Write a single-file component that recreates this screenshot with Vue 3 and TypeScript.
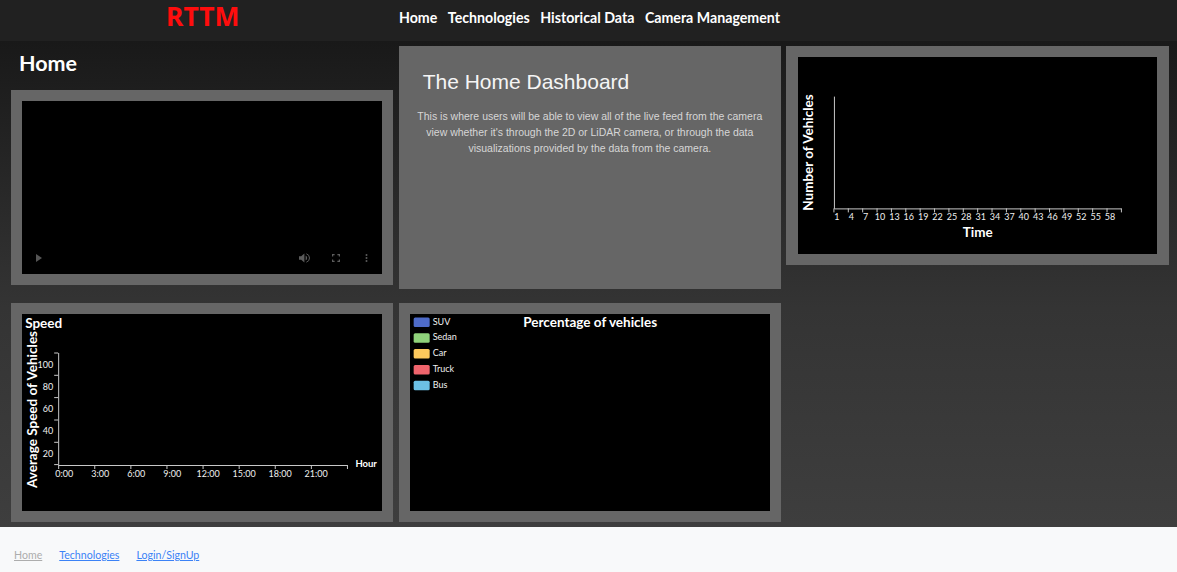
<script setup lang="ts">
const navLinks: string[] = ['Home', 'Technologies', 'Historical Data', 'Camera Management']
const footerLinks = [
  { label: 'Home', muted: true },
  { label: 'Technologies', muted: false },
  { label: 'Login/SignUp', muted: false },
]
const timeLabels: number[] = Array.from({ length: 20 }, (_, i) => 1 + i * 3)
const timeTicks: number[] = Array.from({ length: 21 }, (_, i) => 36 + i * 14.4)
const speedYTicks: number[] = [39, 61.3, 83.6, 106, 128.3, 150.6]
const speedYLabels: number[] = [100, 80, 60, 40, 20]
const hourLabels: string[] = ['0:00', '3:00', '6:00', '9:00', '12:00', '15:00', '18:00', '21:00']
const hourTicks: number[] = Array.from({ length: 9 }, (_, i) => 36 + i * 36.1)
const legend = [
  { label: 'SUV', color: '#4e6bc8' },
  { label: 'Sedan', color: '#8fd27a' },
  { label: 'Car', color: '#fdc95c' },
  { label: 'Truck', color: '#f0646c' },
  { label: 'Bus', color: '#6cc0e4' },
]
</script>

<template>
  <div class="page">
    <header class="topbar">
      <div class="brand">RTTM</div>
      <nav class="nav">
        <a v-for="link in navLinks" :key="link" class="nav-link">{{ link }}</a>
      </nav>
    </header>

    <main class="dashboard">
      <section class="left-col">
        <h1 class="page-title">Home</h1>
        <div class="panel video-panel">
          <div class="video">
            <svg class="ctl-left" width="6" height="8" viewBox="0 0 6 8"><path d="M0 0 L6 4 L0 8 Z" fill="#555" /></svg>
            <div class="ctl-right">
              <span class="ctl-btn">
                <svg width="11" height="10" viewBox="0 0 11 10">
                  <path d="M0 3.2 H2.2 L5.4 0.4 V9.6 L2.2 6.8 H0 Z" fill="#5c5c5c" />
                  <path d="M6.6 2.6 A2.6 2.6 0 0 1 6.6 7.4 Z" fill="#5c5c5c" />
                  <path d="M7.4 0.8 A4.4 4.4 0 0 1 7.4 9.2" fill="none" stroke="#5c5c5c" stroke-width="1" />
                </svg>
              </span>
              <span class="ctl-btn">
                <svg width="8" height="8" viewBox="0 0 8 8">
                  <path d="M0.6 2.6 V0.6 H2.6 M5.4 0.6 H7.4 V2.6 M7.4 5.4 V7.4 H5.4 M2.6 7.4 H0.6 V5.4" fill="none" stroke="#5c5c5c" stroke-width="1.2" />
                </svg>
              </span>
              <span class="ctl-btn">
                <svg width="3" height="8" viewBox="0 0 3 8">
                  <circle cx="1.5" cy="1" r="1" fill="#5c5c5c" />
                  <circle cx="1.5" cy="4" r="1" fill="#5c5c5c" />
                  <circle cx="1.5" cy="7" r="1" fill="#5c5c5c" />
                </svg>
              </span>
            </div>
          </div>
        </div>
      </section>

      <section class="panel intro-panel">
        <h2 class="intro-title">The Home Dashboard</h2>
        <p class="intro-text">
          This is where users will be able to view all of the live feed from the camera view whether it's through the 2D or LiDAR camera, or through the data visualizations provided by the data from the camera.
        </p>
      </section>

      <section class="panel short-panel">
        <svg class="chart" viewBox="0 0 359 196">
          <path d="M36.5 39 V151.5 H324" fill="none" stroke="#c8c8c8" stroke-width="1" />
          <line v-for="t in timeTicks" :key="t" :x1="t" :x2="t" y1="151" y2="155" stroke="#c8c8c8" />
          <text v-for="(n, i) in timeLabels" :key="n" class="tick" :x="39 + i * 14.4" y="162.5" text-anchor="middle">{{ n }}</text>
          <text class="axis-title" x="180" y="180" text-anchor="middle">Time</text>
          <text class="axis-title" transform="translate(15 95) rotate(-90)" text-anchor="middle">Number of Vehicles</text>
        </svg>
      </section>

      <section class="panel">
        <svg class="chart" viewBox="0 0 360 197">
          <text class="axis-title" x="3" y="14">Speed</text>
          <text class="axis-title" transform="translate(15 95.5) rotate(-90)" text-anchor="middle">Average Speed of Vehicles</text>
          <path d="M36.5 39 V151.5 H325" fill="none" stroke="#c8c8c8" stroke-width="1" />
          <line v-for="t in speedYTicks" :key="t" x1="32" x2="36" :y1="t" :y2="t" stroke="#c8c8c8" />
          <line v-for="t in hourTicks" :key="t" :x1="t + 0.5" :x2="t + 0.5" y1="151" y2="155" stroke="#c8c8c8" />
          <text v-for="(n, i) in speedYLabels" :key="n" class="tick" x="31" :y="53.5 + i * 22.3" text-anchor="end">{{ n }}</text>
          <text v-for="(h, i) in hourLabels" :key="h" class="tick" :x="42 + i * 36" y="162.5" text-anchor="middle">{{ h }}</text>
          <text class="hour" x="344" y="153" text-anchor="middle">Hour</text>
        </svg>
      </section>

      <section class="panel">
        <svg class="chart" viewBox="0 0 360 197">
          <g v-for="(item, i) in legend" :key="item.label">
            <rect x="3.5" :y="3.5 + i * 15.8" width="16" height="9.5" rx="1.5" :fill="item.color" />
            <text class="legend" x="22.5" :y="10.5 + i * 15.8">{{ item.label }}</text>
          </g>
          <text class="pie-title" x="180" y="13" text-anchor="middle">Percentage of vehicles</text>
        </svg>
      </section>
    </main>

    <footer class="footer">
      <a v-for="link in footerLinks" :key="link.label" class="footer-link" :class="{ muted: link.muted }">{{ link.label }}</a>
    </footer>
  </div>
</template>

<style scoped>
.page {
  display: flex;
  flex-direction: column;
  height: 572px;
  overflow: hidden;
  font-family: Lato, "Noto Sans", sans-serif;
}
.topbar {
  display: flex;
  align-items: flex-start;
  height: 41px;
  flex: none;
  background: #212121;
  padding-left: 166px;
  box-sizing: border-box;
}
.brand {
  width: 233px;
  color: #ff0d0d;
  font-family: "Noto Sans", sans-serif;
  font-size: 26.5px;
  font-weight: 700;
  line-height: 32px;
}
.nav {
  display: flex;
  gap: 10.5px;
  padding-top: 7px;
}
.nav-link {
  color: #fff;
  font-size: 14.2px;
  font-weight: 700;
  line-height: 22px;
}
.dashboard {
  flex: 1;
  display: grid;
  grid-template-columns: repeat(3, 382.33px);
  grid-template-rows: 243px 219px;
  column-gap: 5.33px;
  row-gap: 14px;
  padding: 5px 0 0 11px;
  box-sizing: border-box;
  background: linear-gradient(180deg, #191919 0%, #343434 55%, #3e3e3e 100%);
}
.left-col {
  display: flex;
  flex-direction: column;
}
.page-title {
  height: 44px;
  margin: 0;
  padding-left: 8px;
  color: #fff;
  font-size: 21.5px;
  font-weight: 700;
  line-height: 34px;
}
.panel {
  box-sizing: border-box;
  background: #666;
  padding: 11px;
  display: flex;
}
.video-panel {
  height: 195px;
}
.video {
  position: relative;
  flex: 1;
  background: #000;
}
.ctl-left {
  position: absolute;
  left: 14px;
  bottom: 12px;
}
.ctl-right {
  position: absolute;
  right: 0;
  bottom: 11px;
  display: flex;
  align-items: center;
}
.ctl-btn {
  display: flex;
  align-items: center;
  justify-content: center;
  width: 31px;
  height: 10px;
}
.intro-panel {
  display: block;
  padding: 0;
  color: #f5f5f5;
  font-family: "Liberation Sans", Arial, sans-serif;
}
.intro-title {
  margin: 0;
  padding: 23px 0 0 24px;
  font-size: 21px;
  font-weight: 400;
  line-height: 25px;
}
.intro-text {
  margin: 14px 0 0;
  padding: 0 15px;
  color: #d6d6d6;
  font-size: 10.5px;
  line-height: 16px;
  text-align: center;
}
.short-panel {
  height: 219px;
  padding: 11px 12px;
}
.chart {
  display: block;
  width: 100%;
  height: 100%;
  background: #000;
}
.tick {
  fill: #f0f0f0;
  font-size: 9px;
}
.axis-title {
  fill: #fff;
  font-size: 13.5px;
  font-weight: 700;
}
.hour {
  fill: #fff;
  font-size: 9.5px;
  font-weight: 700;
}
.legend {
  fill: #f0f0f0;
  font-size: 9px;
}
.pie-title {
  fill: #fff;
  font-size: 13.5px;
  font-weight: 700;
}
.footer {
  flex: none;
  height: 45px;
  display: flex;
  align-items: center;
  gap: 17px;
  padding-left: 14px;
  padding-top: 10px;
  background: #f8f9fa;
  box-sizing: border-box;
}
.footer-link {
  color: #3b82f6;
  font-size: 10.6px;
  text-decoration: underline;
}
.footer-link.muted {
  color: #adadad;
}
</style>

<style>
html, body {
  margin: 0;
  overflow: hidden;
}
</style>
